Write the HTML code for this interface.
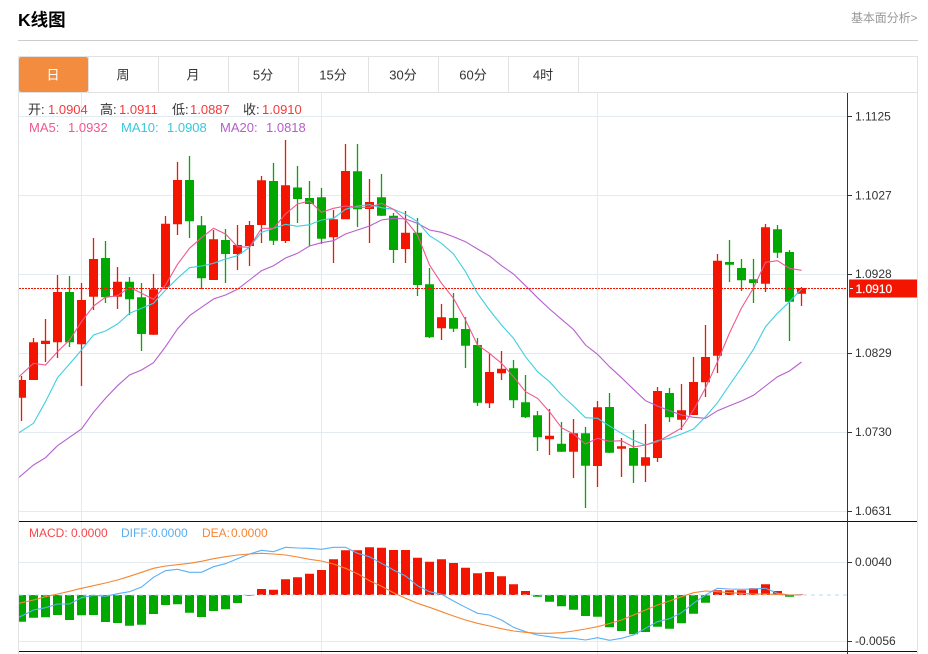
<!DOCTYPE html>
<html lang="zh">
<head>
<meta charset="utf-8">
<title>K线图</title>
<style>
html,body{margin:0;padding:0;background:#fff;width:928px;height:654px;overflow:hidden}
svg{display:block}
text{font-family:"Liberation Sans","Noto Sans CJK SC",sans-serif}
</style>
</head>
<body>
<svg xmlns="http://www.w3.org/2000/svg" width="928" height="654" viewBox="0 0 928 654">
<defs><clipPath id="c"><rect x="19" y="93" width="828" height="561"/></clipPath></defs>
<text x="18" y="26" font-size="17.5" font-weight="700" fill="#000">K线图</text>
<text x="851" y="22" font-size="12" fill="#999" letter-spacing="-0.1">基本面分析&gt;</text>
<path d="M18 40.5H918" stroke="#ccc" fill="none"/>

<!-- frame and tabs -->
<path d="M18.5 56.5H917.5V654M18.5 56.5V654M18 92.5H918" stroke="#e2e2e2" fill="none"/>
<path d="M88.5 57V92M158.5 57V92M228.5 57V92M298.5 57V92M368.5 57V92M438.5 57V92M508.5 57V92M578.5 57V92" stroke="#e2e2e2" fill="none"/>
<rect x="19" y="57" width="69" height="35" rx="2" fill="#f48c40"/>
<g font-size="13" text-anchor="middle" fill="#333">
<text x="53" y="79.5" fill="#fff">日</text>
<text x="123" y="79.5">周</text>
<text x="193" y="79.5">月</text>
<text x="263" y="79.5">5分</text>
<text x="333" y="79.5">15分</text>
<text x="403" y="79.5">30分</text>
<text x="473" y="79.5">60分</text>
<text x="543" y="79.5">4时</text>
</g>

<!-- grid -->
<path d="M19 116.5H847M19 195.5H847M19 274.5H847M19 353.5H847M19 432.5H847M19 511.5H847M19 562.5H847M19 641.5H847M81.5 93V654M321.5 93V654M597.5 93V654" stroke="#e3ebf2" fill="none"/>

<g clip-path="url(#c)">
<!-- red wicks -->
<path stroke="#f41500" stroke-width="1.3" fill="none" d="M21.5 376V421M33.5 338V380M45.5 319V362M57.5 275V358M81.5 283V386M93.5 238V310M117.5 267V309M153.5 274V335M165.5 216V289M177.5 162V235M213.5 230V280M237.5 225V270M249.5 221V266M261.5 176V243M285.5 140V243M333.5 210V263M345.5 144V219M369.5 179V243M405.5 211V263M441.5 304V340M489.5 353V408M501.5 351V380M549.5 409V455M573.5 419V478M597.5 401V487M621.5 438V477M645.5 424V482M657.5 387V462M681.5 384V430M693.5 357V415M705.5 325V397M717.5 254V373M765.5 224V292M801.5 287V306"/>
<!-- green wicks -->
<path stroke="#00a800" stroke-width="1.3" fill="none" d="M69.5 276V347M105.5 241V303M129.5 277V315M141.5 283V351M189.5 156V238M201.5 216V289M225.5 229V283M273.5 163V245M297.5 166V223M309.5 181V246M321.5 188V244M357.5 144V227M381.5 174V216M393.5 213V263M417.5 218V296M429.5 268V338M453.5 293V332M465.5 317V368M477.5 338V406M513.5 360V408M525.5 375V418M537.5 411V451M561.5 422V452M585.5 427V508M609.5 393V453M633.5 430V483M669.5 388V422M729.5 240V282M741.5 259V291M753.5 259V303M777.5 225V258M789.5 250V341"/>
<!-- red bodies -->
<path fill="#f41500" d="M17 380h9V397.7h-9zM29 342.3h9V380h-9zM41 340.7h9V344h-9zM53 292h9V342.3h-9zM77 300h9V344.3h-9zM89 259h9V296.7h-9zM113 281.7h9V296.7h-9zM149 289.3h9V334.7h-9zM161 223.7h9V287.3h-9zM173 180h9V224.3h-9zM209 239.3h9V280h-9zM233 245h9V254h-9zM245 225h9V246h-9zM257 180.3h9V225h-9zM281 185.3h9V241h-9zM329 219.3h9V237.3h-9zM341 171h9V219.3h-9zM365 202h9V209h-9zM401 232.7h9V249h-9zM437 317.3h9V328.3h-9zM485 372h9V403.3h-9zM497 368.7h9V373.3h-9zM545 435.7h9V439.3h-9zM569 433.3h9V451.7h-9zM593 407.3h9V466h-9zM617 446.3h9V448.7h-9zM641 457.3h9V465.7h-9zM653 391h9V458h-9zM677 410.3h9V419.7h-9zM689 382h9V415h-9zM701 357h9V382.3h-9zM713 260.7h9V355.7h-9zM761 227.3h9V283.7h-9zM797 288h9V293.7h-9z"/>
<!-- green bodies -->
<path fill="#00a800" d="M65 292h9V342.3h-9zM101 258h9V297.3h-9zM125 281.7h9V299.3h-9zM137 297.3h9V334h-9zM185 180h9V221.3h-9zM197 225.3h9V278.3h-9zM221 240h9V254h-9zM269 181h9V240.7h-9zM293 187.5h9V199h-9zM305 198h9V204h-9zM317 197.3h9V238.7h-9zM353 171.3h9V209.3h-9zM377 197.3h9V215.7h-9zM389 215.7h9V250h-9zM413 232.7h9V285h-9zM425 284.3h9V337.3h-9zM449 318h9V328.7h-9zM461 329h9V345.7h-9zM473 345h9V402.7h-9zM509 368.3h9V400.3h-9zM521 402.3h9V417.3h-9zM533 415.3h9V437.3h-9zM557 443.7h9V451.7h-9zM581 433.3h9V465.7h-9zM605 407h9V452.7h-9zM629 448h9V465.7h-9zM665 393h9V417.3h-9zM725 262h9V264.7h-9zM737 268h9V280.3h-9zM749 279.3h9V283h-9zM773 229.3h9V252.7h-9zM785 252h9V301.7h-9z"/>

<!-- MA lines -->
<polyline fill="none" stroke="#b660cf" stroke-width="1.1" points="19,477.3 33.5,465 45.5,457.7 57.5,445.7 69.5,437.3 81.5,429 93.5,412.3 105.5,398.3 117.5,385.7 129.5,375 141.5,370 153.5,362.7 165.5,346.7 177.5,329 189.5,315.7 201.5,307.3 213.5,299 225.5,295 237.5,289.3 249.5,280 261.5,270.7 273.5,265.7 285.5,258 297.5,253.3 309.5,246 321.5,242.7 333.5,240.7 345.5,234 357.5,230 369.5,226 381.5,220 393.5,218.3 405.5,219 417.5,223.3 429.5,230 441.5,232.3 453.5,236.7 465.5,241.7 477.5,249 489.5,256 501.5,265.7 513.5,274 525.5,285.7 537.5,297.7 549.5,309 561.5,319.3 573.5,329.5 585.5,345 597.5,354.3 609.5,366.7 621.5,377.7 633.5,389.3 645.5,400.7 657.5,406 669.5,410.7 681.5,415 693.5,417.3 705.5,418.3 717.5,410.7 729.5,405.7 741.5,401 753.5,395.3 765.5,386 777.5,376.7 789.5,371 801.5,362"/>
<polyline fill="none" stroke="#3fcfe0" stroke-width="1.1" points="19,432.7 33.5,423.3 45.5,401.7 57.5,377.7 69.5,364 81.5,350 93.5,335 105.5,331 117.5,324 129.5,313.3 141.5,308.3 153.5,303.3 165.5,290 177.5,278.3 189.5,267.7 201.5,266 213.5,263.3 225.5,259 237.5,255.7 249.5,247.3 261.5,232.3 273.5,228.3 285.5,224.3 297.5,226.3 309.5,224.7 321.5,220 333.5,218.3 345.5,209.3 357.5,206 369.5,204.7 381.5,207.7 393.5,209.3 405.5,214.3 417.5,221.7 429.5,235.7 441.5,243.3 453.5,254 465.5,271.7 477.5,293.3 489.5,310 501.5,325 513.5,338.3 525.5,356.7 537.5,371.7 549.5,381.7 561.5,395 573.5,406 585.5,417.7 597.5,418.3 609.5,426 621.5,433.3 633.5,440.3 645.5,445 657.5,440.7 669.5,438.3 681.5,434 693.5,429 705.5,416.7 717.5,402.7 729.5,385 741.5,367.7 753.5,349.3 765.5,326.7 777.5,313.3 789.5,301.7 801.5,288.7"/>
<polyline fill="none" stroke="#f0588f" stroke-width="1.1" points="19,376.7 33.5,363.3 45.5,365 57.5,351.7 69.5,340 81.5,321.7 93.5,306 105.5,297.3 117.5,295.7 129.5,287.3 141.5,293.3 153.5,299.3 165.5,285 177.5,264.3 189.5,248.3 201.5,237.7 213.5,228.3 225.5,234 237.5,246.7 249.5,247.3 261.5,228.3 273.5,228.3 285.5,214 297.5,204 309.5,201 321.5,212.3 333.5,208.3 345.5,206 357.5,207.3 369.5,207.3 381.5,203.3 393.5,209.3 405.5,220 417.5,235 429.5,265 441.5,283.3 453.5,298.3 465.5,320 477.5,345 489.5,353.3 501.5,363.3 513.5,376.7 525.5,391.7 537.5,398.3 549.5,411.7 561.5,427.7 573.5,434 585.5,444 597.5,438.3 609.5,441.3 621.5,440.7 633.5,447 645.5,445 657.5,441.7 669.5,435 681.5,428 693.5,410 705.5,388 717.5,361.7 729.5,333 741.5,308 753.5,288 765.5,262.3 777.5,260.7 789.5,268.3 801.5,270.3"/>

<!-- MACD bars -->
<path fill="#00a800" d="M17 595h9V621.7h-9zM29 595h9V617.7h-9zM41 595h9V617.3h-9zM53 595h9V615h-9zM65 595h9V620h-9zM77 595h9V615.3h-9zM89 595h9V615h-9zM101 595h9V622h-9zM113 595h9V623h-9zM125 595h9V625.7h-9zM137 595h9V624.7h-9zM149 595h9V614h-9zM161 595h9V605h-9zM173 595h9V604.3h-9zM185 595h9V612.7h-9zM197 595h9V617h-9zM209 595h9V611h-9zM221 595h9V609.3h-9zM233 595h9V603h-9zM245 595h9V595.7h-9zM533 595h9V596.7h-9zM545 595h9V601.7h-9zM557 595h9V606.3h-9zM569 595h9V609.7h-9zM581 595h9V616h-9zM593 595h9V616.7h-9zM605 595h9V627.3h-9zM617 595h9V631h-9zM629 595h9V634.3h-9zM641 595h9V632h-9zM653 595h9V626.7h-9zM665 595h9V628.7h-9zM677 595h9V623.3h-9zM689 595h9V613.7h-9zM701 595h9V602.7h-9zM785 595h9V596.7h-9z"/>
<path fill="#f41500" d="M257 589h9V595h-9zM269 589.7h9V595h-9zM281 579.3h9V595h-9zM293 577.3h9V595h-9zM305 573.7h9V595h-9zM317 570h9V595h-9zM329 559.3h9V595h-9zM341 550.3h9V595h-9zM353 550.3h9V595h-9zM365 547.3h9V595h-9zM377 547.7h9V595h-9zM389 550h9V595h-9zM401 550h9V595h-9zM413 557.7h9V595h-9zM425 561.7h9V595h-9zM437 559.3h9V595h-9zM449 563h9V595h-9zM461 567.7h9V595h-9zM473 573.3h9V595h-9zM485 572h9V595h-9zM497 576.3h9V595h-9zM509 584.3h9V595h-9zM521 591h9V595h-9zM713 590.3h9V595h-9zM725 590.3h9V595h-9zM737 590.3h9V595h-9zM749 588.3h9V595h-9zM761 584.3h9V595h-9zM773 591h9V595h-9zM797 594.5h9V595h-9z"/>
<path d="M19 595H847" stroke="#b5dcf0" stroke-dasharray="4 4" fill="none"/>

<!-- DEA / DIFF -->
<polyline fill="none" stroke="#5cb0f5" stroke-width="1.1" points="19,617.3 33.5,610 45.5,607.7 57.5,604 69.5,604 81.5,597.7 93.5,595.3 105.5,596.3 117.5,593.7 129.5,591.7 141.5,587 153.5,577.3 165.5,570.7 177.5,569.3 189.5,572.3 201.5,572.3 213.5,566.7 225.5,563.7 237.5,558.7 249.5,554 261.5,550.3 273.5,551.7 285.5,547.3 297.5,548 309.5,548.3 321.5,549.3 333.5,547.3 345.5,547.3 357.5,553.3 369.5,556.7 381.5,563.3 393.5,570 405.5,576 417.5,585.7 429.5,591.7 441.5,594.3 453.5,601 465.5,607.3 477.5,613.3 489.5,615 501.5,620 513.5,627.3 525.5,631.7 537.5,635 549.5,636.7 561.5,638.3 573.5,638.3 585.5,640 597.5,637.7 609.5,640.3 621.5,638.3 633.5,635 645.5,628.3 657.5,621.7 669.5,618.7 681.5,612.7 693.5,603.3 705.5,595 717.5,588.3 729.5,589 741.5,589.3 753.5,589 765.5,588.3 777.5,593.3 789.5,595 801.5,594.7"/>
<polyline fill="none" stroke="#f58634" stroke-width="1.1" points="19,603.3 33.5,600 45.5,596.7 57.5,594 69.5,591.3 81.5,588.3 93.5,585.7 105.5,583 117.5,580 129.5,576.3 141.5,572.3 153.5,568.3 165.5,566 177.5,564.7 189.5,563.3 201.5,561.3 213.5,558.7 225.5,556.7 237.5,555 249.5,554 261.5,553.3 273.5,554 285.5,555 297.5,557 309.5,559.3 321.5,561 333.5,564 345.5,568.3 357.5,573.7 369.5,580.7 381.5,586.3 393.5,592.7 405.5,598.3 417.5,603.3 429.5,607.3 441.5,611.7 453.5,616 465.5,620 477.5,623.3 489.5,626 501.5,628.7 513.5,631 525.5,632.3 537.5,633.3 549.5,633.3 561.5,632.7 573.5,631 585.5,629 597.5,626.7 609.5,623.5 621.5,620 633.5,615 645.5,610 657.5,605 669.5,601 681.5,596.7 693.5,592.7 705.5,591 717.5,591.7 729.5,592.7 741.5,593.3 753.5,594 765.5,594 777.5,594.3 789.5,595 801.5,595"/>
</g>

<!-- last price dotted -->
<path d="M19 288.5H847" stroke="#f41500" stroke-dasharray="2 1" fill="none"/>

<!-- panel lines and axis -->
<path d="M19 521.5H917M19 651.5H917" stroke="#111" fill="none"/>
<path d="M847.5 93V654" stroke="#333" fill="none"/>
<path d="M848 116.5H852M848 195.5H852M848 274.5H852M848 353.5H852M848 432.5H852M848 511.5H852M848 562.5H852M848 641.5H852" stroke="#333" fill="none"/>

<rect x="849" y="279.5" width="68" height="18" fill="#f41500"/>
<path d="M850 288.5H853" stroke="#fff" fill="none"/>

<g font-size="12" fill="#333">
<text x="855" y="120.5">1.1125</text>
<text x="855" y="199.5">1.1027</text>
<text x="855" y="278">1.0928</text>
<text x="855" y="357">1.0829</text>
<text x="855" y="436">1.0730</text>
<text x="855" y="515">1.0631</text>
<text x="855" y="566">0.0040</text>
<text x="855" y="645">-0.0056</text>
</g>
<text x="855.5" y="293" font-size="12" fill="#fff" stroke="#fff" stroke-width="0.2">1.0910</text>

<!-- legends -->
<g font-size="13">
<text x="28" y="114" fill="#333">开:</text><text x="48" y="114" fill="#f5393a">1.0904</text>
<text x="100" y="114" fill="#333">高:</text><text x="119" y="114" fill="#f5393a">1.0911</text>
<text x="172" y="114" fill="#333">低:</text><text x="190" y="114" fill="#f5393a">1.0887</text>
<text x="243" y="114" fill="#333">收:</text><text x="262" y="114" fill="#f5393a">1.0910</text>
<text x="29" y="132" fill="#f0588f">MA5:</text><text x="68" y="132" fill="#f0588f">1.0932</text>
<text x="121" y="132" fill="#35c9de">MA10:</text><text x="167" y="132" fill="#35c9de">1.0908</text>
<text x="220" y="132" fill="#b45fc8">MA20:</text><text x="266" y="132" fill="#b45fc8">1.0818</text>
</g>
<g font-size="12">
<text x="29" y="537" fill="#f5484b">MACD:</text><text x="71" y="537" fill="#f5484b">0.0000</text>
<text x="121" y="537" fill="#5aaef0">DIFF:</text><text x="151" y="537" fill="#5aaef0">0.0000</text>
<text x="202" y="537" fill="#f58536">DEA:</text><text x="231" y="537" fill="#f58536">0.0000</text>
</g>
</svg>
</body>
</html>
